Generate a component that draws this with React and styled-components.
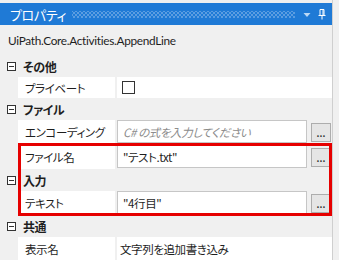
import React from 'react';
import styled, { createGlobalStyle } from 'styled-components';

const GlobalStyle = createGlobalStyle`
  body {
    margin: 0;
    background: #f0f0f0;
    font-family: "Noto Sans CJK JP", "Noto Sans", sans-serif;
    font-size: 11.5px;
    letter-spacing: -0.4px;
    font-feature-settings: "palt";
    color: #1e1e1e;
  }
`;

const Panel = styled.div`
  width: 333px;
  height: 260px;
  padding-top: 3px;
  box-sizing: border-box;
  overflow: hidden;
  border-right: 1px solid #cfcfcf;
`;

const TitleBar = styled.div`
  display: flex;
  align-items: center;
  height: 22px;
  margin-right: -1px;
  padding: 0 7px 0 10px;
  background: #1f7ad6;
  color: #fff;
`;

const TitleText = styled.span`
  font-size: 13px;
  line-height: 1;
`;

const Gripper = styled.div`
  flex: 1;
  height: 7px;
  margin: 0 8px 0 6px;
  background-image: radial-gradient(circle, rgba(255, 255, 255, 0.28) 0.7px, transparent 0.9px),
    radial-gradient(circle, rgba(255, 255, 255, 0.28) 0.7px, transparent 0.9px);
  background-size: 4px 4px;
  background-position: 0 0, 2px 2px;
`;

const TitleIcon = styled.svg`
  display: block;
  margin-left: ${({ gap }) => gap || 0}px;
`;

const SubTitle = styled.div`
  display: flex;
  align-items: center;
  height: 30px;
  padding-left: 8px;
  font-family: Lato, "Noto Sans", sans-serif;
  font-size: 11.8px;
  letter-spacing: -0.3px;
`;

const Grid = styled.div`
  display: flex;
  flex-direction: column;
  gap: 1px;
  padding-top: 1px;
`;

const CategoryRow = styled.div`
  display: flex;
  align-items: center;
  height: 20px;
  padding-left: 7px;
  font-size: 12px;
  font-weight: bold;
`;

const Toggle = styled.span`
  position: relative;
  width: 7px;
  height: 7px;
  margin-right: 7px;
  border: 1px solid #333;
  background: #fff;

  &::after {
    content: '';
    position: absolute;
    left: 1px;
    right: 1px;
    top: 3px;
    height: 1px;
    background: #333;
  }
`;

const PropRow = styled.div`
  display: grid;
  grid-template-columns: 18px 97px 1fr;
  height: ${({ tall }) => (tall ? 24 : 21)}px;
`;

const Label = styled.div`
  grid-column: 2;
  display: flex;
  align-items: center;
  padding-left: 7px;
  background: #fff;
  white-space: nowrap;
  overflow: hidden;
`;

const Value = styled.div`
  display: flex;
  align-items: center;
  margin-left: 2px;
  padding-left: ${({ pad }) => pad || 0}px;
  background: ${({ plain }) => (plain ? '#fff' : 'transparent')};
`;

const CheckBox = styled.span`
  width: 11px;
  height: 11px;
  border: 1px solid #333;
  background: #fff;
`;

const TextBox = styled.div`
  flex: 1;
  align-self: stretch;
  display: flex;
  align-items: center;
  margin: 0 0 1px;
  padding-left: 5px;
  border: 1px solid #c6c6c6;
  background: #fff;
  color: ${({ placeholder }) => (placeholder ? '#8c8c8c' : '#1e1e1e')};
  font-style: ${({ placeholder }) => (placeholder ? 'italic' : 'normal')};
  white-space: nowrap;
  overflow: hidden;
`;

const DotsButton = styled.div`
  width: 18px;
  height: 17px;
  margin: 0 1px 0 4px;
  border: 1px solid #adadad;
  background: #e5e5e5;
  font-size: 9px;
  font-weight: bold;
  letter-spacing: 0;
  line-height: 20px;
  text-align: center;
  color: #333;
`;

const Highlight = styled.div`
  position: relative;
  display: flex;
  flex-direction: column;
  gap: 1px;
`;

const RedFrame = styled.div`
  position: absolute;
  top: -2px;
  bottom: -1px;
  left: 18px;
  right: 0;
  border: 3px solid #e60000;
  pointer-events: none;
`;

const Category = ({ children }) => (
  <CategoryRow>
    <Toggle />
    {children}
  </CategoryRow>
);

const TextProp = ({ label, value, placeholder }) => (
  <PropRow tall>
    <Label>{label}</Label>
    <Value>
      <TextBox placeholder={placeholder}>{value || placeholder}</TextBox>
      <DotsButton>...</DotsButton>
    </Value>
  </PropRow>
);

const App = () => (
  <>
    <GlobalStyle />
    <Panel>
      <TitleBar>
        <TitleText>プロパティ</TitleText>
        <Gripper />
        <TitleIcon width="8" height="8" viewBox="0 0 8 8">
          <path d="M0.5 3 H7.5 L4 7 Z" fill="#bcd8f5" />
        </TitleIcon>
        <TitleIcon width="8" height="11" viewBox="0 0 8 11" gap={7}>
          <path d="M2 0.5 H6 V6.5 H2 Z M5 1 V6.5 M0.5 6.5 H7.5 M4 6.5 V10.5" stroke="#fff" strokeWidth="1" fill="none" />
        </TitleIcon>
      </TitleBar>
      <SubTitle>UiPath.Core.Activities.AppendLine</SubTitle>
      <Grid>
        <Category>その他</Category>
        <PropRow>
          <Label>プライベート</Label>
          <Value plain pad={5}>
            <CheckBox />
          </Value>
        </PropRow>
        <Category>ファイル</Category>
        <TextProp label="エンコーディング" placeholder="C# の式を入力してください" />
        <Highlight>
          <TextProp label="ファイル名" value={'"テスト.txt"'} />
          <Category>入力</Category>
          <TextProp label="テキスト" value={'"4行目"'} />
          <RedFrame />
        </Highlight>
        <Category>共通</Category>
        <PropRow tall>
          <Label>表示名</Label>
          <Value plain pad={3}>文字列を追加書き込み</Value>
        </PropRow>
      </Grid>
    </Panel>
  </>
);

export default App;
